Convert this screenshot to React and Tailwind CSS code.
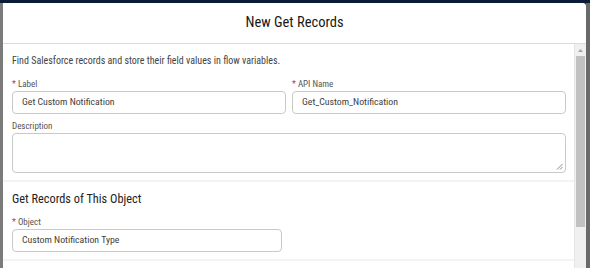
export default function App() {
  const font = { fontFamily: '"Roboto Condensed", Lato, sans-serif' };
  return (
    <div className="w-[590px] h-[268px] overflow-hidden flex flex-col bg-[#0b1a36]" style={font}>
      <div className="h-[3px] bg-[#0b1a36]" />
      <div className="flex flex-1 min-h-0">
        <div className="w-[3px] bg-[#7b7b7b]" />
        <div className="flex-1 flex flex-col bg-white rounded-tr-[3px]">
          <div className="h-[41px] flex items-center justify-center border-b border-[#dcdcdc]">
            <h1 className="text-[14.5px] leading-[18px] text-[#181818]">New Get Records</h1>
          </div>
          <div className="flex flex-1 min-h-0">
            <div className="flex-1 flex flex-col border-r border-[#e5e5e5]">
              <div className="pl-[9px] pr-[8px] pt-[10px]">
                <p className="text-[10px] text-[#444444] leading-[13px]">
                  Find Salesforce records and store their field values in flow variables.
                </p>
                <div className="flex gap-[6px] mt-[11px]">
                  <Field label="Label" value="Get Custom Notification" required />
                  <Field label="API Name" value="Get_Custom_Notification" required />
                </div>
                <div className="mt-[6px]">
                  <div className="text-[9px] text-[#555] leading-[12px] mb-[1px]">Description</div>
                  <div className="relative h-[40px] border border-[#c9c9c9] rounded-[4px]">
                    <svg className="absolute right-[2px] bottom-[2px]" width="7" height="7" viewBox="0 0 7 7">
                      <path d="M6.5 1 L1 6.5 M6.5 4 L4 6.5" stroke="#888" strokeWidth="1" />
                    </svg>
                  </div>
                </div>
              </div>
              <div className="h-[2px] bg-[#f3f3f3] mt-[7px]" />
              <div className="pl-[9px] pt-[9px]">
                <h2 className="text-[12.3px] text-[#222] leading-[16px]">Get Records of This Object</h2>
                <div className="mt-[9px] w-[270px]">
                  <Label text="Object" required />
                  <div className="h-[23px] border border-[#c9c9c9] rounded-[4px] flex items-center pl-[9px] text-[9.8px] text-[#3e3e3c]">
                    Custom Notification Type
                  </div>
                </div>
              </div>
              <div className="h-[2px] bg-[#f3f3f3] mt-[7px]" />
              <div className="flex-1" />
            </div>
            <div className="w-[11px] bg-[#f0f0f0] flex flex-col">
              <div className="h-[12px] flex items-center justify-center">
                <svg width="5" height="3" viewBox="0 0 5 3">
                  <path d="M0 3 L2.5 0 L5 3 Z" fill="#a3a3a3" />
                </svg>
              </div>
              <div className="h-[171px] bg-[#c1c1c1] mx-[1px]" />
            </div>
          </div>
        </div>
        <div className="w-[4px] bg-[#6a6a6a]" />
      </div>
    </div>
  );
}

function Label({ text, required }) {
  return (
    <div className="text-[9px] text-[#555] leading-[12px] mb-[1px]">
      {required && <span className="text-[#c23934] mr-[2px]">*</span>}
      {text}
    </div>
  );
}

function Field({ label, value, required }) {
  return (
    <div className="flex-1">
      <Label text={label} required={required} />
      <div className="h-[23px] border border-[#c9c9c9] rounded-[4px] flex items-center pl-[9px] text-[9.8px] text-[#3e3e3c]">
        {value}
      </div>
    </div>
  );
}
